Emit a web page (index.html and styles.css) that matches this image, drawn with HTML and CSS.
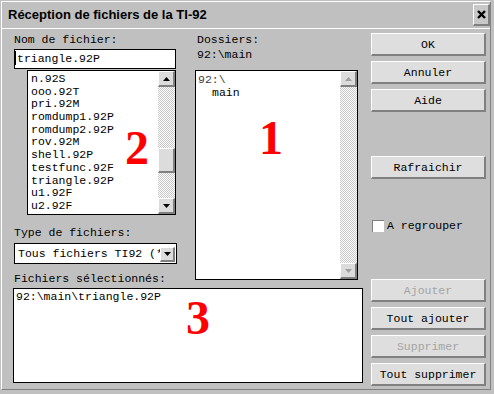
FILE: index.html
```html
<!DOCTYPE html>
<html lang="fr">
<head>
<meta charset="utf-8">
<title>Réception de fichiers de la TI-92</title>
<link rel="stylesheet" href="styles.css">
</head>
<body>
<div class="window">
  <div class="frame">
    <div class="titlebar">
      <span class="title">Réception de fichiers de la TI-92</span>
      <span class="close">
        <svg width="9" height="9" viewBox="0 0 9 9"><path d="M1 1L8 8M8 1L1 8" stroke="#000" stroke-width="2.4" fill="none"/></svg>
      </span>
    </div>
    <div class="client">
      <div class="files">
        <div class="top">
          <div class="col-left">
            <div class="label">Nom de fichier:</div>
            <div class="input"><span class="caret"></span>triangle.92P</div>
            <div class="list file-list">
              <div class="items">
                <div class="item">n.92S</div>
                <div class="item">ooo.92T</div>
                <div class="item">pri.92M</div>
                <div class="item">romdump1.92P</div>
                <div class="item">romdump2.92P</div>
                <div class="item">rov.92M</div>
                <div class="item">shell.92P</div>
                <div class="item">testfunc.92F</div>
                <div class="item">triangle.92P</div>
                <div class="item">u1.92F</div>
                <div class="item">u2.92F</div>
              </div>
              <div class="scrollbar">
                <div class="sb-btn"><svg width="7" height="4" viewBox="0 0 7 4"><path d="M3.5 0L7 4H0Z" fill="#000"/></svg></div>
                <div class="track"><div class="thumb"></div></div>
                <div class="sb-btn"><svg width="7" height="4" viewBox="0 0 7 4"><path d="M0 0H7L3.5 4Z" fill="#000"/></svg></div>
              </div>
              <span class="marker m2">2</span>
            </div>
            <div class="label type-label">Type de fichiers:</div>
            <div class="select">
              <span class="select-text">Tous fichiers TI92 (*.92?)</span>
              <span class="drop"><svg width="7" height="4" viewBox="0 0 7 4"><path d="M0 0H7L3.5 4Z" fill="#000"/></svg></span>
            </div>
            <div class="label sel-label">Fichiers sélectionnés:</div>
          </div>
          <div class="col-mid">
            <div class="label mid-label">Dossiers:</div>
            <div class="label mid-label path">92:\main</div>
            <div class="list folder-list">
              <div class="items">
                <div class="item root">92:\</div>
                <div class="item sub">main</div>
              </div>
              <div class="scrollbar">
                <div class="sb-btn"><svg width="7" height="4" viewBox="0 0 7 4"><path d="M3.5 0L7 4H0Z" fill="#a0a0a0"/></svg></div>
                <div class="track"></div>
                <div class="sb-btn"><svg width="7" height="4" viewBox="0 0 7 4"><path d="M0 0H7L3.5 4Z" fill="#a0a0a0"/></svg></div>
              </div>
              <span class="marker m1">1</span>
            </div>
          </div>
        </div>
        <div class="selected-box">
          <div class="item">92:\main\triangle.92P</div>
          <span class="marker m3">3</span>
        </div>
      </div>
      <div class="buttons">
        <div class="btn">OK</div>
        <div class="btn gap">Annuler</div>
        <div class="btn gap">Aide</div>
        <div class="btn refresh">Rafraichir</div>
        <div class="check-row"><span class="checkbox"></span><span>A regrouper</span></div>
        <div class="btn disabled add">Ajouter</div>
        <div class="btn gap">Tout ajouter</div>
        <div class="btn gap disabled">Supprimer</div>
        <div class="btn gap">Tout supprimer</div>
      </div>
    </div>
  </div>
</div>
</body>
</html>
```

FILE: styles.css
```css
* { box-sizing: border-box; }
html, body { margin: 0; padding: 0; background: #c0c0c0; }
body {
  font-family: "Liberation Mono", "DejaVu Sans Mono", monospace;
  font-size: 11.5px;
  line-height: 13px;
  color: #000;
}
.window {
  width: 494px;
  height: 394px;
  padding: 1px 3px 4px 1px;
  background: #c0c0c0;
}
.frame {
  height: 100%;
  border-left: 1px solid #fff;
  border-top: 1px solid #fff;
  border-right: 1px solid #808080;
  border-bottom: 1px solid #808080;
  display: flex;
  flex-direction: column;
}
.titlebar {
  height: 27px;
  border-bottom: 1px solid #fff;
  display: flex;
  align-items: flex-start;
  justify-content: space-between;
  padding-left: 6px;
}
.title {
  font-family: "Liberation Sans", Arial, sans-serif;
  font-weight: bold;
  font-size: 13px;
  line-height: 26px;
}
.close {
  width: 17px;
  height: 22px;
  margin-top: 2px;
  background: #c8c8c8;
  border-style: solid;
  border-width: 1px 2px 2px 1px;
  border-color: #fff #808080 #808080 #fff;
  display: flex;
  align-items: center;
  justify-content: center;
}
.client {
  display: flex;
  padding: 4px 0 0 11px;
}
.files { width: 350px; }
.top {
  display: grid;
  grid-template-columns: 164px 163px;
  column-gap: 18px;
  align-items: start;
}
.col-left, .col-mid { display: flex; flex-direction: column; }
.label { margin-left: 1px; white-space: nowrap; }
.mid-label { margin-left: 2px; }
.path { margin-top: 2px; }
.input {
  margin: 3px 0 0 1px;
  width: 162px;
  height: 20px;
  background: #fff;
  border: 1px solid #000;
  padding: 2px 0 0 0;
  display: flex;
  align-items: flex-start;
}
.caret {
  width: 1px;
  height: 14px;
  background: #000;
  margin: -1px 1px 0 0;
}
.list {
  position: relative;
  background: #fff;
  border: 1px solid #000;
  display: flex;
}
.file-list {
  margin: 1px 0 0 14px;
  width: 149px;
  height: 145px;
}
.folder-list {
  margin-top: 9px;
  width: 163px;
  height: 210px;
}
.items {
  flex: 1;
  padding: 2px 0 0 3px;
  overflow: hidden;
  white-space: nowrap;
}
.folder-list .items { padding-left: 2px; }
.item { height: 13px; }
.file-list .item { height: 12.7px; line-height: 12.7px; }
.root { color: #404040; }
.sub { padding-left: 14px; }
.scrollbar {
  width: 17px;
  display: flex;
  flex-direction: column;
}
.sb-btn {
  height: 16px;
  background: #dcdcdc;
  border-style: solid;
  border-width: 1px 2px 2px 1px;
  border-color: #fff #808080 #808080 #fff;
  display: flex;
  align-items: center;
  justify-content: center;
  flex: none;
}
.track {
  flex: 1;
  background-image: conic-gradient(#c8c8c8 25%, #fff 0 50%, #c8c8c8 0 75%, #fff 0);
  background-size: 2px 2px;
}
.thumb {
  margin-top: 61px;
  height: 25px;
  background: #dcdcdc;
  border-style: solid;
  border-width: 1px 2px 2px 1px;
  border-color: #fff #808080 #808080 #fff;
}
.type-label { margin-top: 11px; }
.select {
  margin: 4px 0 0 1px;
  width: 163px;
  height: 21px;
  background: #fff;
  border: 1px solid #000;
  display: flex;
  align-items: center;
  padding: 0 1px 0 3px;
  overflow: hidden;
}
.select-text {
  flex: 1;
  overflow: hidden;
  white-space: nowrap;
}
.drop {
  width: 15px;
  height: 15px;
  flex: none;
  background: #dcdcdc;
  border-style: solid;
  border-width: 1px 2px 2px 1px;
  border-color: #fff #808080 #808080 #fff;
  display: flex;
  align-items: center;
  justify-content: center;
  margin-top: 2px;
}
.sel-label { margin-top: 8px; }
.selected-box {
  position: relative;
  margin-top: 3px;
  width: 350px;
  height: 95px;
  background: #fff;
  border: 1px solid #000;
  padding: 1px 0 0 2px;
}
.marker {
  position: absolute;
  font-family: "Liberation Serif", "Times New Roman", serif;
  font-weight: bold;
  font-size: 48px;
  line-height: 48px;
  color: #f00;
}
.m2 { left: 97px; top: 53px; }
.m1 { left: 63px; top: 43px; }
.m3 { left: 172px; top: 5px; }
.buttons {
  margin-left: 8px;
  width: 115px;
  display: flex;
  flex-direction: column;
}
.btn {
  height: 23px;
  background: #dedede;
  border-style: solid;
  border-width: 1px 2px 2px 1px;
  border-color: #fff #808080 #808080 #fff;
  display: flex;
  align-items: center;
  justify-content: center;
  white-space: nowrap;
}
.btn.gap { margin-top: 5px; }
.btn.refresh { margin-top: 44px; }
.btn.add { margin-top: 47px; }
.btn.disabled { color: #a4a4a4; }
.check-row {
  margin-top: 40px;
  height: 13px;
  display: flex;
  align-items: center;
  white-space: nowrap;
}
.checkbox {
  width: 12px;
  height: 12px;
  margin: 0 3px 0 1px;
  background: #fff;
  border-style: solid;
  border-width: 1px 0 0 1px;
  border-color: #808080;
  flex: none;
}
```
